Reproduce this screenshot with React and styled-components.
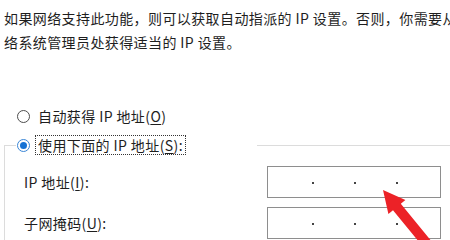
import React from "react";
import styled, { createGlobalStyle } from "styled-components";

const Global = createGlobalStyle`
  html, body { margin: 0; padding: 0; background: #ffffff; }
  body { font-family: "Noto Sans CJK SC", "Noto Sans", sans-serif; }
`;

const Page = styled.div`
  position: relative;
  width: 450px;
  height: 240px;
  overflow: hidden;
  background: #ffffff;
  color: #1e1e1e;
  font-size: 14px;
  letter-spacing: 0.4px;
`;

const Description = styled.div`
  padding: 6px 0 0 4px;
`;

const DescLine = styled.div`
  height: 24px;
  line-height: 24px;
  white-space: nowrap;
  overflow: hidden;
`;

const OptionRow = styled.div`
  display: flex;
  align-items: center;
  height: 22px;
  margin-top: ${(p) => p.$top || 0}px;
  padding-left: 17px;
`;

const Radio = styled.span`
  box-sizing: border-box;
  width: 13px;
  height: 13px;
  border-radius: 50%;
  border: 1px solid ${(p) => (p.$checked ? "#3a86d6" : "#4d4d4d")};
  background: #fff;
  display: flex;
  align-items: center;
  justify-content: center;
  flex: none;
  margin-left: ${(p) => p.$offset || 0}px;
  &::after {
    content: "";
    display: ${(p) => (p.$checked ? "block" : "none")};
    width: 7px;
    height: 7px;
    border-radius: 50%;
    background: #1672d4;
  }
`;

const RadioLabel = styled.span`
  margin-left: 5px;
  padding: 0 2px;
  height: 20px;
  line-height: 19px;
  box-sizing: border-box;
  border: 1px dotted ${(p) => (p.$focused ? "#333" : "transparent")};
  white-space: nowrap;
`;

const Key = styled.span`
  text-decoration: underline;
  text-underline-offset: 2px;
`;

const Group = styled.fieldset`
  margin: 7px 0 0 4px;
  padding: 0;
  width: 520px;
  height: 140px;
  border: 1px solid #dcdcdc;
  min-width: 0;
`;

const Legend = styled.legend`
  margin-left: 11px;
  padding: 0;
  width: 241px;
  height: 22px;
  display: flex;
  align-items: center;
`;

const GroupBody = styled.div`
  padding: 10px 0 0 19px;
  display: grid;
  grid-template-columns: 243px 174px;
  grid-auto-rows: 32px;
  row-gap: 9px;
  align-items: center;
`;

const FieldLabel = styled.span`
  white-space: nowrap;
`;

const IpBox = styled.div`
  box-sizing: border-box;
  height: 32px;
  border: 1px solid #8e8e8e;
  background: #fff;
  display: flex;
  align-items: center;
`;

const Seg = styled.span`
  width: ${(p) => p.$w}px;
  flex: none;
`;

const Dot = styled.span`
  width: 2px;
  height: 2px;
  margin-top: 2px;
  background: #444;
  flex: none;
`;

const ArrowLayer = styled.svg`
  position: absolute;
  left: 0;
  top: 0;
  pointer-events: none;
`;

function IpField() {
  return (
    <IpBox>
      <Seg $w={44} />
      <Dot />
      <Seg $w={40} />
      <Dot />
      <Seg $w={40} />
      <Dot />
    </IpBox>
  );
}

export default function App() {
  return (
    <>
      <Global />
      <Page>
        <Description>
          <DescLine>如果网络支持此功能，则可以获取自动指派的 IP 设置。否则，你需要从网</DescLine>
          <DescLine>络系统管理员处获得适当的 IP 设置。</DescLine>
        </Description>
        <OptionRow $top={51}>
          <Radio />
          <RadioLabel>
            自动获得 IP 地址(<Key>O</Key>)
          </RadioLabel>
        </OptionRow>
        <Group>
          <Legend>
            <Radio $checked $offset={1} />
            <RadioLabel $focused>
              使用下面的 IP 地址(<Key>S</Key>):
            </RadioLabel>
          </Legend>
          <GroupBody>
            <FieldLabel>
              IP 地址(<Key>I</Key>):
            </FieldLabel>
            <IpField />
            <FieldLabel>
              子网掩码(<Key>U</Key>):
            </FieldLabel>
            <IpField />
          </GroupBody>
        </Group>
        <ArrowLayer width="450" height="240" viewBox="0 0 450 240">
          <polygon
            points="383,190 405.4,200 400.8,203.8 434.4,244.8 426.6,251.2 393,210.2 388.4,214"
            fill="#ec2227"
          />
        </ArrowLayer>
      </Page>
    </>
  );
}
